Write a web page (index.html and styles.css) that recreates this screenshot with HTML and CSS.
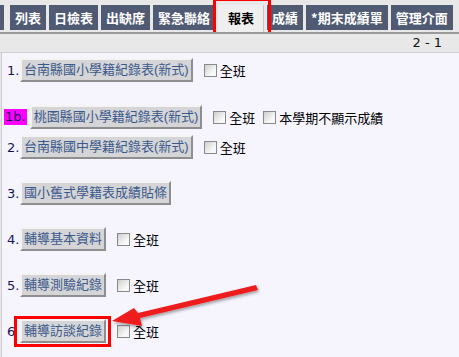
FILE: index.html
```html
<!DOCTYPE html>
<html lang="zh-Hant">
<head>
    <meta charset="UTF-8">
    <title>報表</title>
    <link rel="stylesheet" href="styles.css">
</head>
<body>
    <div class="tabbar">
        <div class="tabs">
            <span class="tab first">檔案</span>
            <span class="tab">列表</span>
            <span class="tab">日檢表</span>
            <span class="tab">出缺席</span>
            <span class="tab">緊急聯絡</span>
            <span class="tab active">報表</span>
            <span class="tab">成績</span>
            <span class="tab">*期末成績單</span>
            <span class="tab">管理介面</span>
        </div>
    </div>
    <div class="pager">2 - 1</div>

    <div class="content">
        <div class="row first-row">
            <span class="num">1.</span>
            <button class="btn">台南縣國小學籍紀錄表(新式)</button>
            <label class="opt"><span class="cb"></span>全班</label>
        </div>
        <div class="row tight">
            <span class="num mark">1b.</span>
            <button class="btn">桃園縣國小學籍紀錄表(新式)</button>
            <label class="opt"><span class="cb"></span>全班</label>
            <label class="opt near"><span class="cb"></span>本學期不顯示成績</label>
        </div>
        <div class="row">
            <span class="num">2.</span>
            <button class="btn">台南縣國中學籍紀錄表(新式)</button>
            <label class="opt"><span class="cb"></span>全班</label>
        </div>
        <div class="row">
            <span class="num">3.</span>
            <button class="btn">國小舊式學籍表成績貼條</button>
        </div>
        <div class="row">
            <span class="num">4.</span>
            <button class="btn">輔導基本資料</button>
            <label class="opt"><span class="cb"></span>全班</label>
        </div>
        <div class="row">
            <span class="num">5.</span>
            <button class="btn">輔導測驗紀錄</button>
            <label class="opt"><span class="cb"></span>全班</label>
        </div>
        <div class="row last">
            <span class="num">6</span>
            <span class="boxed"><button class="btn">輔導訪談紀錄</button></span>
            <label class="opt"><span class="cb"></span>全班</label>
        </div>
    </div>

    <!-- annotation arrow -->
    <svg class="arrow" width="459" height="357" viewBox="0 0 459 357">
        <defs>
            <filter id="shadow" x="-10%" y="-30%" width="130%" height="180%">
                <feDropShadow dx="1" dy="2" stdDeviation="1.5" flood-color="#000" flood-opacity="0.35"/>
            </filter>
        </defs>
        <polygon filter="url(#shadow)" fill="#ee1c1c"
            points="256,285 258,290 140,318 142,326 112,321 134,308 138,313"/>
    </svg>
</body>
</html>
```

FILE: styles.css
```css
body {
    margin: 0;
    background: #e8e8e8;
    font-family: "Noto Sans CJK TC", "DejaVu Sans", sans-serif;
    font-size: 13px;
    color: #000;
    width: 459px;
    height: 357px;
    overflow: hidden;
    position: relative;
}
.tabbar {
    padding-top: 5px;
    height: 27px;
    border-bottom: 2px solid #9a9a9a;
    overflow: hidden;
}
.tabs {
    display: flex;
    gap: 3px;
    white-space: nowrap;
    margin-left: -32px;
}
.tab {
    display: block;
    height: 25px;
    line-height: 25px;
    padding: 0 5px;
    background: #505a73;
    color: #fff;
    font-weight: bold;
    font-size: 13px;
}
.tab.first {
    margin-right: 3px;
}
.tab.active {
    position: relative;
    background: #efefef;
    color: #000;
    padding: 0 9px 0 10px;
    height: 27px;
    border-right: 1px solid #c8c8c8;
}
.tab.active::after {
    content: "";
    position: absolute;
    left: -5px;
    top: -7px;
    right: -8px;
    bottom: -3px;
    border: 3px solid #f00;
}
.pager {
    height: 18px;
    line-height: 18px;
    text-align: right;
    padding-right: 17px;
    font-family: "DejaVu Sans", sans-serif;
    font-size: 13px;
    color: #111;
    border-bottom: 1px solid #cfcfcf;
}
.content {
    margin-left: 1px;
    border-left: 1px solid #cfcfcf;
    background: #f6f5fe;
    height: 299px;
    overflow: hidden;
    padding: 5px 0 0 2px;
}
.row {
    display: flex;
    align-items: center;
    height: 24px;
    margin-bottom: 22px;
}
.row.first-row {
    margin-bottom: 23px;
}
.row.tight {
    margin-bottom: 6px;
}
.row.last {
    margin-bottom: 0;
}
.num {
    display: inline-block;
    width: 13px;
    margin-left: 3px;
    font-family: "DejaVu Sans", sans-serif;
    font-size: 13px;
    color: #14145a;
}
.num.mark {
    width: auto;
    margin-left: 0;
    margin-right: 3px;
    padding: 0 1px;
    background: #ff00ff;
    line-height: 16px;
}
.btn {
    height: 24px;
    margin: 0;
    padding: 0 2px;
    background: #d5d4d6;
    color: #3b5a8c;
    font-family: "Liberation Sans", "Noto Sans CJK TC", sans-serif;
    font-size: 13px;
    border: 2px solid;
    border-color: #f4f4f4 #8e8e8e #8e8e8e #f4f4f4;
    line-height: 18px;
}
.boxed {
    position: relative;
    display: inline-flex;
}
.boxed::after {
    content: "";
    position: absolute;
    left: -6px;
    top: -3px;
    right: -5px;
    bottom: -4px;
    border: 3px solid #f00;
}
.opt {
    display: inline-flex;
    align-items: center;
    margin-left: 11px;
    gap: 3px;
    font-size: 13px;
}
.opt.near {
    margin-left: 8px;
}
.cb {
    display: inline-block;
    width: 11px;
    height: 11px;
    border: 1px solid #8a8a8a;
    background: linear-gradient(135deg, #cfcfcf, #f8f8f8 70%);
}
.arrow {
    position: absolute;
    left: 0;
    top: 0;
    pointer-events: none;
}
```
